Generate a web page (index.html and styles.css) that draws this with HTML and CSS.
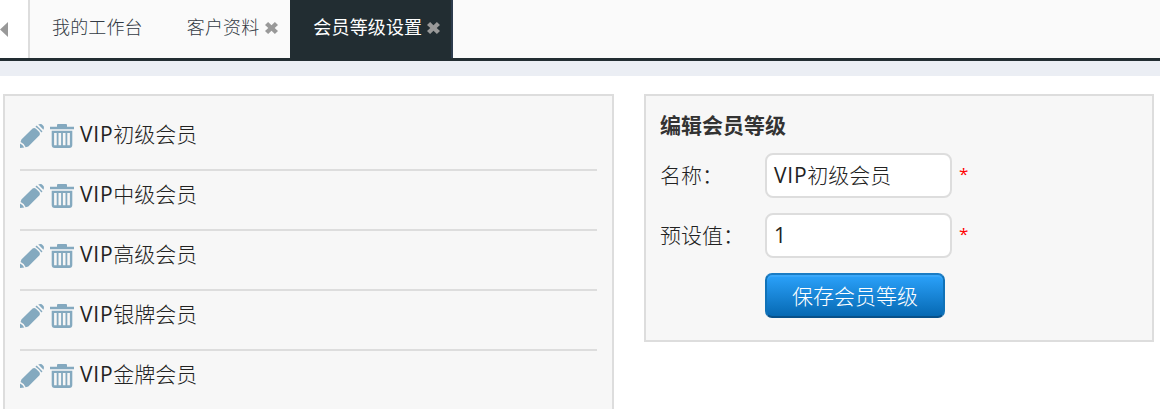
FILE: index.html
```html
<!DOCTYPE html>
<html lang="zh-CN">
<head>
<meta charset="utf-8">
<title>会员等级设置</title>
<link rel="stylesheet" href="styles.css">
</head>
<body>
<svg class="sprite" aria-hidden="true">
  <symbol id="pencil" viewBox="0 0 24 24"><path d="M0 24V19.400Q2.600 20.500 4.300 23.400zM.6 18L1.400 15.600 12.600 4.400Q14.400 3.300 16.200 4.900L19 7.700Q20.500 9.500 19.500 11.200L8.300 22.400 5.700 23.200Q4.200 19.500.6 18zM15.400 2.700L16.700 1.500Q18 3 19.700 4.400 21 6 22.500 7.300L21.300 8.500Q20 6.600 18.600 5.300 17.200 3.800 15.400 2.700zM18.200.5Q20-.3 21.800.3L23.700 2.200Q24.300 4.200 23.400 5.800Q22.300 4.600 21 3.200T18.200.5z"/></symbol>
  <symbol id="trash" viewBox="0 0 24 24"><path fill-rule="evenodd" d="M7 2.800V1Q7 0 8 0h8q1 0 1 1v1.800h7v2.400H0V2.800zM1.700 6.800h20.600V21q0 3-3 3H4.700q-3 0-3-3zM4.100 9v12.300h2.600V9zm4.400 0v12.300h2.600V9zm4.400 0v12.300h2.600V9zm4.400 0v12.300h2.600V9z"/></symbol>
  <symbol id="close" viewBox="0 0 13 12"><path d="M3.100 0L6.500 3.200 9.900 0 13 2.900 9.700 6 13 9.100 9.900 12 6.500 8.800 3.100 12 0 9.100 3.300 6 0 2.900z"/></symbol>
</svg>
<nav class="tabs">
  <div class="scroll-left"><svg viewBox="0 0 8 15"><path d="M8 0v15L0 7.500z"/></svg></div>
  <a class="tab home">我的工作台</a>
  <a class="tab">客户资料<svg class="close"><use href="#close"/></svg></a>
  <a class="tab active">会员等级设置<svg class="close"><use href="#close"/></svg></a>
</nav>
<div class="band"></div>
<main class="content">
  <section class="panel levels">
    <div class="row"><svg class="icon"><use href="#pencil"/></svg><svg class="icon"><use href="#trash"/></svg><span><span class="latin">VIP</span>初级会员</span></div>
    <div class="row"><svg class="icon"><use href="#pencil"/></svg><svg class="icon"><use href="#trash"/></svg><span><span class="latin">VIP</span>中级会员</span></div>
    <div class="row"><svg class="icon"><use href="#pencil"/></svg><svg class="icon"><use href="#trash"/></svg><span><span class="latin">VIP</span>高级会员</span></div>
    <div class="row"><svg class="icon"><use href="#pencil"/></svg><svg class="icon"><use href="#trash"/></svg><span><span class="latin">VIP</span>银牌会员</span></div>
    <div class="row last"><svg class="icon"><use href="#pencil"/></svg><svg class="icon"><use href="#trash"/></svg><span><span class="latin">VIP</span>金牌会员</span></div>
  </section>
  <section class="panel editor">
    <h2>编辑会员等级</h2>
    <div class="field"><label>名称：</label><div class="input"><span class="latin">VIP</span>初级会员</div><span class="required">*</span></div>
    <div class="field"><label>预设值：</label><div class="input"><span class="latin">1</span></div><span class="required">*</span></div>
    <button class="save">保存会员等级</button>
  </section>
</main>
</body>
</html>
```
FILE: styles.css
```css
* { box-sizing: border-box; }
body {
  margin: 0;
  height: 409px;
  overflow: hidden;
  background: #fff;
  color: #222;
  font: 300 21px/30px "Open Sans", "Noto Sans CJK SC", sans-serif;
}
.sprite { display: none; }
.tabs {
  display: flex;
  height: 61px;
  background: #fafafa;
  border-bottom: 3px solid #222d32;
  font-size: 18px;
  line-height: 54px;
  color: #333b44;
}
.scroll-left {
  width: 30px;
  background: #fff;
  border-right: 2px solid #ddd;
}
.scroll-left svg {
  display: block;
  width: 8px;
  height: 15px;
  margin-top: 22px;
  fill: #999;
}
.tab {
  display: flex;
  padding: 0 12px 0 22px;
  letter-spacing: .15px;
  white-space: nowrap;
}
.home { padding-right: 22px; }
.active {
  padding-left: 23px;
  padding-right: 11px;
  background: #222d32;
  color: #fff;
  font-weight: 400;
  border-right: 2px solid #2c3b4d;
}
.close {
  width: 13px;
  height: 12px;
  margin: 22px 0 0 6px;
  fill: #999;
}
.active .close { margin-left: 5px; }
.band { height: 15px; background: #ebeef4; }
.content {
  display: flex;
  align-items: flex-start;
  gap: 30px;
  padding: 18px 6px 0 3px;
}
.panel { border: 2px solid #ddd; background: #f7f7f7; }
.levels { width: 611px; height: 315px; padding: 13px 15px 0; border-bottom: 0; }
.row {
  display: flex;
  height: 60px;
  gap: 6px;
  padding-top: 8px;
  border-bottom: 2px solid #ddd;
}
.row:first-child { height: 62px; padding-top: 10px; }
.row.last { height: 45px; border-bottom: 0; }
.icon {
  width: 24px;
  height: 24px;
  margin-top: 5px;
  fill: #84a9bf;
}
.latin { font-weight: 400; letter-spacing: .75px; }
.editor { width: 510px; height: 248px; padding: 14px; }
h2 { margin: 0 0 13px; color: #333; font-size: 21px; line-height: 30px; font-weight: 700; }
.field { display: flex; align-items: center; height: 45px; margin-bottom: 15px; }
label { width: 105px; padding-bottom: 2px; }
.input {
  width: 187px;
  height: 45px;
  padding: 5px 7px;
  border: 2px solid #ddd;
  border-radius: 8px;
  background: #fff;
}
.required { margin: -3px 0 0 7px; color: #f00; font-size: 17px; font-weight: 400; }
.save {
  display: block;
  width: 180px;
  height: 45px;
  margin-left: 105px;
  padding: 0;
  border: 2px solid;
  border-color: #1a7cc4 #1072b8 #075089;
  border-radius: 7px;
  background: linear-gradient(#2ba2fb, #0669b3);
  box-shadow: inset 0 2px 0 rgba(255, 255, 255, .08);
  color: #fff;
  font: inherit;
}
```
